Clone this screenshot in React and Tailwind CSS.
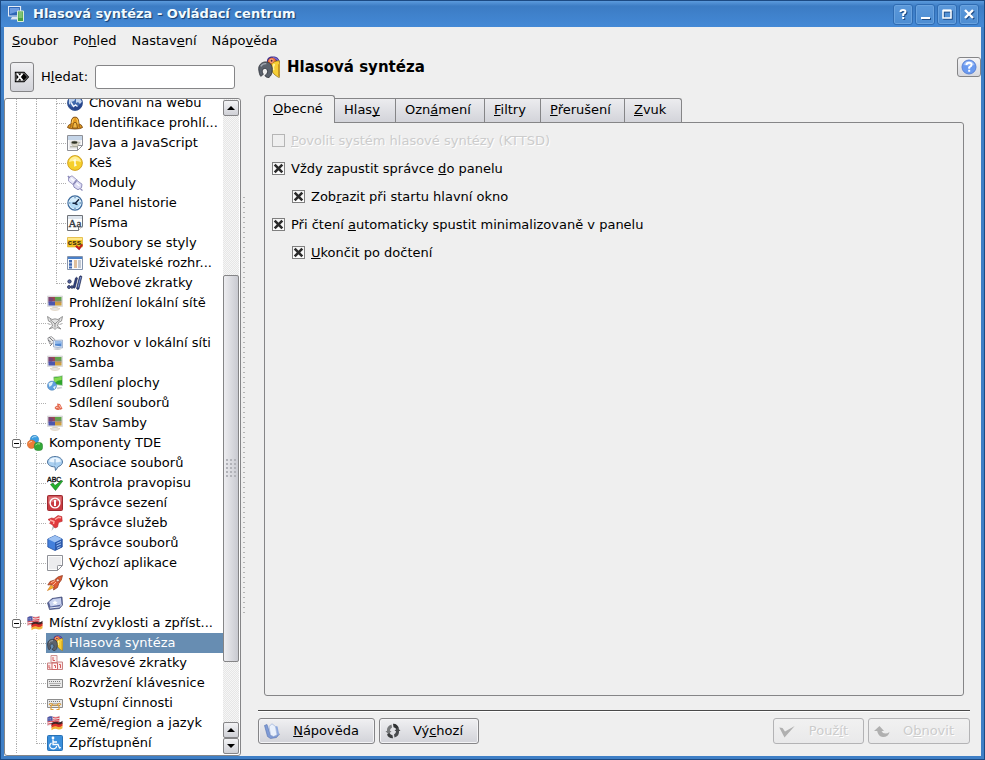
import { useState } from "react";

/* Label with an access key: the character after "&" is underlined. */
function Mnemonic({ text }) {
  const at = text.indexOf("&");
  if (at < 0) return <span>{text}</span>;
  return (
    <span className="whitespace-pre">
      {text.slice(0, at)}
      <u className="underline underline-offset-1 decoration-1 [text-decoration-skip-ink:none]">{text[at + 1]}</u>
      {text.slice(at + 2)}
    </span>
  );
}

function Svg({ size = 16, children }) {
  return (
    <svg width={size} height={size} viewBox="0 0 16 16" fill="none" className="block shrink-0" aria-hidden="true">
      {children}
    </svg>
  );
}

const SambaArt = () => (
  <>
    <path d="M.5 1h15v10.500H.5z" fill="#e2e2e2" stroke="#cfcfd2" strokeWidth=".6" />
    <path d="M1.500 2H8v4.500H1.500z" fill="#9c4a52" />
    <path d="M8 2h6.500v4.500H8z" fill="#5fa548" />
    <path d="M1.500 6.500H8v4H1.500z" fill="#4a56b0" />
    <path d="M8 6.500h6.500v4H8z" fill="#cfa03c" />
    <path d="M1.500 2l5 1.500L5 7 1.500 8z" fill="#5b3f93" opacity=".55" />
    <path d="M8 4l6.500 1v3L8 7z" fill="#9a6a9c" opacity=".35" />
    <path d="M6 11.500h4l1 1.500H5z" fill="#d3d3d6" />
    <path d="M3 13.500q5-2 10 0-1 2-5 2t-5-2z" fill="#e6e4e4" stroke="#d8c4a6" strokeWidth=".5" />
  </>
);

const FlagArt = () => (
  <>
    <path d="M.5 2.500q3-2 5.500-.7t6.500-.6l-.5 8q-3 1.300-6 .5T.5 10.500z" fill="#f6e9ec" stroke="#c08a96" strokeWidth=".4" />
    <path d="M6 2.600q3 1 6.300-.5M5.500 4.700q3.500 1 6.700-.4M.7 7q3-1.400 5.500-.5t6-.5M.7 9.300q3-1.400 5.500-.5t6-.5" stroke="#d64650" strokeWidth="1.100" />
    <path d="M.5 2.500q2.600-1.700 5-.9v4.200Q3 5.500.5 6.500z" fill="#4a58a8" />
    <path d="M1.500 3.500h3M1.500 5h3" stroke="#b9c0e2" strokeWidth=".6" strokeDasharray="1 .6" />
    <path d="M4.500 8q3.500-2 6-1t5-1.300V9q-2.500 2-5 1t-6 1z" fill="#402426" />
    <path d="M4.500 10.200q3.500-2 6-1t5-1.300V11q-2.500 2-5 1t-6 1z" fill="#db3229" />
    <path d="M4.500 12.700q3.500-2 6-1t5-1.300v2.800q-2.500 2-5 1t-6 1z" fill="#f0b33a" />
  </>
);

const ParrotArt = () => (
  <>
    <path d="M6.500 4.200C6.500 1.500 8 .4 10.500.4c3-.1 4.900 1.200 5.200 4L10 10z" fill="#40308c" />
    <path d="M11 1.200q3.500.3 4.200 4" stroke="#7a6bd0" strokeWidth="1" />
    <path d="M7 5.300C7 2.500 8.500 1 10.800 1.200c1.800.4 2.500 1.800 2.100 3.800L10.500 9z" fill="#ee6a32" />
    <path d="M9.500 6c1.200-1.400 3.700-2.700 6.200-2.500.4 3.500.2 8-.2 12.200-3-1.300-5.600-3.700-5.900-6.700z" fill="#f7cf35" stroke="#8b6b18" strokeWidth=".5" />
    <path d="M12 5.800q-1.500 2-.6 4.500" stroke="#fff3a0" strokeWidth="1.200" />
    <path d="M15 6v8.500" stroke="#c8931f" strokeWidth=".8" />
    <circle cx="9.800" cy="3.400" r="1.600" fill="#f7a27a" />
    <circle cx="9.900" cy="3.500" r=".7" fill="#4a2036" />
    <path d="M.6 10.200C.1 7 2.200 4.400 5.500 4.300c3.300-.1 5 2.500 4.900 5.500 0 2.600-.9 4.700-2.400 5.800-1.300.2-2.500-.4-3-1.400 1.700-.9 2.400-2.600 1.700-4.200-1-1.500-3-1.200-3.500.5-.2 1 .1 2 .7 2.800l-1.900 1.500C1.200 13.800.8 12 .6 10.200z" fill="#5b626c" stroke="#292d34" strokeWidth=".6" />
    <path d="M2 7.600Q3.400 5.400 6 5.600" stroke="#a2a9b2" />
  </>
);

const KeyboardArt = () => (
  <>
    <path d="M.5 4.500h15v8H.5z" fill="#e9e9e9" stroke="#8d8d8d" />
    <path d="M2 6.500h12M2.500 8.500h11" stroke="#787878" strokeDasharray="1 1" />
    <path d="M3 10.500h10" stroke="#858585" />
  </>
);

const PageArt = () => (
  <>
    <path d="M.5.5h15v10l-5 5H.5z" fill="#fbfbfb" stroke="#8e9097" />
    <path d="M2 2h12v8l-4 4H2z" fill="#ececee" />
    <path d="M15.500 10.500l-5 5v-4.200q0-.8.8-.8z" fill="#fff" stroke="#8e9097" />
  </>
);

const icons = {
  globe: (
    <>
      <circle cx="8" cy="8" r="7.500" fill="#3f68ac" stroke="#2d4a86" strokeWidth=".8" />
      <path d="M2 4q3-3 6-2 1 2-1 4l-3 1-2 3zM9 3q4-1 6 4l-2 2-2-2-2 1z" fill="#c3d5ef" />
      <path d="M.8 8l3.700 4.500L8 9l3 2.500L15 7q.5 6-4.500 8Q2 16 .8 8z" fill="#27458c" />
      <path d="M4 7.500l2.500 4L8.500 10l2 1.500" stroke="#eef4ff" strokeWidth="1.500" />
    </>
  ),
  hat: (
    <>
      <path d="M.5 12.500Q1 9.500 4 9q0-5 2-6.500 2-.8 4 0Q12 4 12 9q3 .5 3.500 3.500-2 1.500-7.500 1.500T.5 12.500z" fill="#e39a20" stroke="#7a4b14" strokeWidth=".9" />
      <path d="M5 8q.5-4 2-4.600M9.500 3.500Q11 5 11 9" stroke="#ffd36b" />
      <path d="M4 9.500q0 3-1.500 3.500M6.500 8l-1 5h5l-1-5q-1.500-1.500-3 0zM12 9.500q0 3 1.500 3.500" fill="#f0b844" stroke="#7a4a12" strokeWidth=".8" />
    </>
  ),
  java: (
    <>
      <PageArt />
      <path d="M1 1h14v4H1z" fill="#c5d5e8" />
      <path d="M4 7q4-2 7 0l2 .5-1.500 1.500-1 2.500h-4L4.500 9z" fill="#d9d5c5" stroke="#8a8c7e" strokeWidth=".4" />
      <ellipse cx="7.500" cy="7.500" rx="3" ry="1.300" fill="#2f3326" />
      <path d="M3 11.800h8" stroke="#a5a594" />
    </>
  ),
  cache: (
    <>
      <circle cx="8" cy="8" r="7.400" fill="#f6cf2a" stroke="#cc9a1c" strokeWidth=".9" />
      <path d="M2 7C2.800 2.800 6 1.500 8 1.500s5.200 1.300 6 5.500q-6-2-12 0z" fill="#fff09a" />
      <path d="M6.500 5.800L8 5v5.500l1.500-.8" stroke="#fffce0" strokeWidth="1.600" />
    </>
  ),
  module: (
    <>
      <path d="M1.500 2.500L5 .8l4.500 3.700L6 9.500 1.500 6z" fill="#e9e8f8" stroke="#9492be" strokeWidth=".9" />
      <path d="M6.500 10L10 5.500l5 3.700-.5 3.500-3.500 2-4-2.500z" fill="#dcdbf3" stroke="#8482b4" strokeWidth=".9" />
      <path d="M6 9.500l4-5M.8 1l2 2M13.500 14l2 1.500" stroke="#8a88b8" strokeWidth="1.200" />
      <path d="M4 3.500l3 2.500M9.500 8.500l3 2.500" stroke="#fff" strokeWidth="1.200" />
    </>
  ),
  clock: (
    <>
      <circle cx="8" cy="8" r="7.100" fill="#e4f3fc" stroke="#3e6c9e" strokeWidth="1.200" />
      <circle cx="8" cy="8" r="5.500" fill="#b5dcf6" />
      <path d="M3 7q1-4 5-4t5 4q-5-1-10 0z" fill="#d9effc" />
      <path d="M12 4.300L8.300 8.300H5.500M8 8.500l2.500 1.200" stroke="#15233c" strokeWidth="1.400" />
      <path d="M8 2v1.300M8 12.700V14M2 8h1.300M12.700 8H14" stroke="#4476a6" />
    </>
  ),
  fonts: (
    <>
      <path d="M.5.500h15v11l-4 4H.5z" fill="#fdfdfd" stroke="#6f7379" />
      <path d="M1 1h14v3H1z" fill="#dfe6ee" />
      <text x="1.500" y="11.500" fontSize="11" fontFamily="Liberation Serif, serif" fill="#32363c" stroke="#32363c" strokeWidth=".3">Aa</text>
      <path d="M11.500 15.500v-3.500h4" fill="#fff" stroke="#6f7379" />
    </>
  ),
  css: (
    <>
      <path d="M.5 2.500h15v9.500H.5z" fill="#f3c326" stroke="#d8ab26" strokeWidth=".6" />
      <path d="M1 3h14v2H1z" fill="#ffe98a" />
      <text x=".8" y="9.500" fontSize="8" fontFamily="Liberation Sans, sans-serif" fontWeight="bold" fill="#3b2a10">css</text>
      <path d="M8.500 11.500l1.500-1 2 2 2.700-3.500 1 1-3.500 5z" fill="#d11a1a" stroke="#991212" strokeWidth=".5" />
    </>
  ),
  list: (
    <>
      <path d="M.5 1.500h15v13H.5z" fill="#f7f9fc" stroke="#8494ad" />
      <path d="M1 2h14v2H1z" fill="#4a80c8" />
      <path d="M2 5h3v2.500H2zM2 8.300h3v2.400H2zM2 11.500h3v2H2z" fill="#3f68b0" />
      <path d="M7 6h3M7 8h3M7 10h3M7 12h3" stroke="#c9863c" />
      <path d="M11 6h3M11 8h3M11 10h3M11 12h3" stroke="#8d97a8" />
    </>
  ),
  shortcut: (
    <>
      <path d="M6 12.500L8.500 3q1-1.500 2 0L8.200 12.500q-1 1.500-2.200 0zM9.500 13.500l3-12q1-1.300 2.400 0l-3 12.500q-1.500 1.300-2.400-.5z" fill="#2e3f80" stroke="#1b2344" strokeWidth=".6" />
      <path d="M11 12.500l2.700-10.500" stroke="#8ea4dd" strokeWidth=".8" />
      <circle cx="2.500" cy="6.500" r="1.700" fill="#5566a0" stroke="#232b50" strokeWidth=".8" />
      <circle cx="2" cy="12" r="1.500" fill="#5566a0" stroke="#232b50" strokeWidth=".8" />
      <circle cx="5" cy="12" r="1.300" fill="#5566a0" stroke="#232b50" strokeWidth=".8" />
    </>
  ),
  samba: <SambaArt />,
  proxy: (
    <>
      <path d="M.5 1.500l4.500 3q3-1.300 6 0l4.500-3-1 4.500-3 1.500L10.500 11l3.500 3-4-1.500L8 14.500l-2-2L2 14l3.500-3-1-3.500-3-1.500z" fill="#e2e2e2" stroke="#8b8b8b" strokeWidth=".9" />
      <path d="M5.500 6.500L8 9l2.500-2.500M8 9v3.500M3 4.500l2.500 2M13 4.500l-2.500 2" stroke="#8f8f8f" />
      <path d="M.5 8.500l3 1M15.500 8.500l-3 1" stroke="#a5a5a5" />
    </>
  ),
  lanchat: (
    <>
      <path d="M.8 3l3.500-1.500 3.500 3-1 3.500-4 1z" fill="#e9e9ea" stroke="#8b8c8f" strokeWidth=".8" />
      <path d="M2 2l4 4M5 9l-2 2M.8 5l3 2" stroke="#77797d" />
      <path d="M6.500 5.500l9-.5v8l-9-1z" fill="#dbe6f5" stroke="#9aabc6" strokeWidth=".8" />
      <path d="M8 6.500h6.500v5L8 10.500z" fill="#4f86d0" />
      <path d="M8 6.500h6.500v2L8 9z" fill="#94bbec" />
      <path d="M6 14q4-2 9-.3-4 2.300-9 .3z" fill="#c5cad3" />
    </>
  ),
  desktopshare: (
    <>
      <path d="M6.500 2L15.500.8v9.700L7.500 9.500z" fill="#2fa52c" stroke="#c4d6c4" strokeWidth=".8" />
      <path d="M7.300 3l7.400-1.300V5q-4 0-7.400 3z" fill="#84d94e" />
      <circle cx="5" cy="10.700" r="4.600" fill="#5f9fe0" stroke="#5383b3" strokeWidth=".5" />
      <path d="M1.500 8.500q3-2.500 4.500-1.500l-1 3-2.500 2zM6 12l3-1.500-1.500 4z" fill="#dff1f8" />
      <path d="M9.500 12.500l5-.8.8 1.500-5 1z" fill="#d0d2d6" />
    </>
  ),
  fileshare: (
    <>
      <path d="M7.500 13q1-2.500 3-2.500L10 8.500l3 .5 2.500 4.500q-1 1.500-3 1-3 1.500-5-1.500z" fill="#e2694f" />
      <path d="M9 12.500q2-1 3 1M12 10l2 3" stroke="#ffc7b5" />
    </>
  ),
  components: (
    <>
      <circle cx="7.500" cy="4.500" r="4.200" fill="#3a9ee2" stroke="#2476b4" strokeWidth=".5" />
      <circle cx="4.500" cy="9.300" r="4.200" fill="#ee7c38" stroke="#c05e24" strokeWidth=".5" />
      <rect x="7.300" y="7.500" width="8.300" height="8" rx="3" fill="#34a838" stroke="#237c26" strokeWidth=".5" />
      <path d="M5 3q1.500-2 4.500-1.300M2 8.300q1-2 3-2" stroke="#fff" strokeOpacity=".6" />
      <path d="M8.500 10q2-2 4.500-1" stroke="#9be28c" />
    </>
  ),
  bubble: (
    <>
      <path d="M8 1.500c4.200 0 7.500 2.300 7.500 5.500 0 2-1.500 3.700-4.200 4.600L8.500 15.500l-.5-3.600C3.700 11.800.5 9.900.5 7S3.800 1.500 8 1.500z" fill="#a9cff0" stroke="#53779f" />
      <path d="M2 6.500q1-4 6-4t6 4q-3 1-6 1t-6-1z" fill="#eaf5ff" />
      <path d="M8 4v6" stroke="#8fb5d8" strokeWidth="1.200" />
    </>
  ),
  spell: (
    <>
      <text x="0" y="6.500" fontSize="7" fontFamily="Liberation Sans, sans-serif" fill="#111" stroke="#111" strokeWidth=".35">ABC</text>
      <path d="M3.500 9.500l2.500-1.500 2 2.600L14.500 5.500l1.200.6L8.500 15.500z" fill="#23b02b" stroke="#127018" strokeWidth=".6" />
    </>
  ),
  power: (
    <>
      <rect x=".5" y=".5" width="15" height="15" rx="1" fill="#c93a40" stroke="#9c2b30" />
      <path d="M1.500 1.500h13v5q-6-1-13 2z" fill="#e07478" />
      <circle cx="8" cy="8" r="4.900" stroke="#fff" strokeWidth="1.400" />
      <path d="M8 5v6" stroke="#fff" strokeWidth="2" />
    </>
  ),
  pin: (
    <>
      <path d="M6 10l-1.500 6L8.500 11z" fill="#b4b6ba" />
      <path d="M1 4.500L4.500 3l2.500.5L11 .6l3.800 1 .4 4.700-3.700 1.200L10.500 12l-2.500 1-3-3.500L2.500 8.300l1.500-1.500z" fill="#e0393c" stroke="#b82a2e" strokeWidth=".6" />
      <path d="M8 4.500l3.500-2.300 2.500.5M3 5l4 1.500-.5 2.500" stroke="#ffa9a2" strokeWidth="1.400" />
    </>
  ),
  cube: (
    <>
      <path d="M.8 4L8 .6 15.200 4v8L8 15.500.8 12z" fill="#4380dc" stroke="#234e9c" strokeWidth=".8" />
      <path d="M.8 4L8 .6 15.200 4 8 7.500z" fill="#9cc1f3" />
      <path d="M8 7.500L15.200 4v8L8 15.500z" fill="#2b59ac" />
      <path d="M9.500 8.500l4.500-2M9.500 11l4.500-2M10 13.300l3.500-1.600" stroke="#a5c6f5" />
    </>
  ),
  page: <PageArt />,
  rocket: (
    <>
      <path d="M4 10L.5 15.500 7 12.500z" fill="#f7b32b" stroke="#cf7415" strokeWidth=".6" />
      <path d="M15.500.5q-5 .5-8 4.500L3 6.500.8 10 5 9.500 7 11.500l-.5 3.500 4-2.500 1.300-4Q15 5.500 15.500.5z" fill="#dd5c34" stroke="#8e3a20" strokeWidth=".7" />
      <circle cx="10.800" cy="5.300" r="1.500" fill="#f4dcd2" stroke="#8e2c14" strokeWidth=".6" />
      <path d="M4 7.700L8 5.500M6 10l3-3" stroke="#ffb994" />
    </>
  ),
  sources: (
    <>
      <path d="M.5 8L5 3.500 15 2l.5 8-3 3.500-10 1z" fill="#5a679f" stroke="#39436f" strokeWidth=".7" />
      <path d="M2 7l4-3 8-1 .5 6.500-11 2z" fill="#c9d2ee" />
      <path d="M2.800 13l9.500-1 2.700-2.500" stroke="#e5e9f5" />
      <path d="M8 5l.8 1.800 2 .1-1.500 1.300.5 1.800L8 9l-1.700 1 .4-1.900L5.200 6.900l2-.1z" fill="#fff" />
    </>
  ),
  flags: <FlagArt />,
  parrot: <ParrotArt />,
  keys: (
    <>
      <path d="M4 .5h6v7H4z" fill="#fcf0f0" stroke="#cf9292" />
      <path d="M.5 8h6v6.500h-6zM10 7h5.500v7.500H10z" fill="#fbeaea" stroke="#c98383" />
      <path d="M5 8h5.500v6.500H5z" fill="#fff4f4" stroke="#cf6666" />
      <path d="M6 2v3.500h2M2 10v3h1.500M12 9.500h1.500V13M7 10.500h1.500V13" stroke="#d75c5c" />
    </>
  ),
  keyboard: <KeyboardArt />,
  inputactions: (
    <>
      <KeyboardArt />
      <path d="M3.500 14.500h3M9.500 14.500h3M4 14.500q-.5-5 2-4.500h4q2.500-.5 2 4.500M2 10q2-3 4 0M10 10q2-3 4 0" stroke="#e2a23b" strokeWidth="1.200" />
    </>
  ),
  access: (
    <>
      <rect x=".5" y=".5" width="15" height="15" rx="1" fill="#3a8fdc" stroke="#2a72b4" />
      <circle cx="6" cy="3" r="1.400" fill="#fff" />
      <path d="M6 4.500v5h5l1.500 3.500 1.500-.5M6.200 7H10" stroke="#fff" strokeWidth="1.300" />
      <path d="M4.500 8q-2.500 1.500-1.500 4 1.500 2.500 4.500 1.700 2-.8 2.200-2.700" stroke="#fff" strokeWidth="1.200" />
    </>
  ),
};

const tree = [
  { level: 3, icon: "globe", label: "Chování na webu" },
  { level: 3, icon: "hat", label: "Identifikace prohlí..." },
  { level: 3, icon: "java", label: "Java a JavaScript" },
  { level: 3, icon: "cache", label: "Keš" },
  { level: 3, icon: "module", label: "Moduly" },
  { level: 3, icon: "clock", label: "Panel historie" },
  { level: 3, icon: "fonts", label: "Písma" },
  { level: 3, icon: "css", label: "Soubory se styly" },
  { level: 3, icon: "list", label: "Uživatelské rozhr..." },
  { level: 3, icon: "shortcut", label: "Webové zkratky", last: true },
  { level: 2, icon: "samba", label: "Prohlížení lokální sítě" },
  { level: 2, icon: "proxy", label: "Proxy" },
  { level: 2, icon: "lanchat", label: "Rozhovor v lokální síti" },
  { level: 2, icon: "samba", label: "Samba" },
  { level: 2, icon: "desktopshare", label: "Sdílení plochy" },
  { level: 2, icon: "fileshare", label: "Sdílení souborů" },
  { level: 2, icon: "samba", label: "Stav Samby", last: true },
  { level: 1, icon: "components", label: "Komponenty TDE" },
  { level: 2, icon: "bubble", label: "Asociace souborů" },
  { level: 2, icon: "spell", label: "Kontrola pravopisu" },
  { level: 2, icon: "power", label: "Správce sezení" },
  { level: 2, icon: "pin", label: "Správce služeb" },
  { level: 2, icon: "cube", label: "Správce souborů" },
  { level: 2, icon: "page", label: "Výchozí aplikace" },
  { level: 2, icon: "rocket", label: "Výkon" },
  { level: 2, icon: "sources", label: "Zdroje", last: true },
  { level: 1, icon: "flags", label: "Místní zvyklosti a zpříst..." },
  { level: 2, icon: "parrot", label: "Hlasová syntéza" },
  { level: 2, icon: "keys", label: "Klávesové zkratky" },
  { level: 2, icon: "keyboard", label: "Rozvržení klávesnice" },
  { level: 2, icon: "inputactions", label: "Vstupní činnosti" },
  { level: 2, icon: "flags", label: "Země/region a jazyk" },
  { level: 2, icon: "access", label: "Zpřístupnění", last: true },
];

/* One 20px indent column of the tree with its dotted guide lines. */
function Guide({ elbow, last, expander }) {
  return (
    <span className="relative flex w-5 shrink-0 flex-col pl-[10px]">
      <span className={`h-[11px] border-l border-dotted border-[#b0b0b0] ${elbow ? "border-b" : ""}`} />
      {!last && <span className="h-[9px] border-l border-dotted border-[#b0b0b0]" />}
      {expander && (
        <button type="button" aria-label="Sbalit" className="absolute left-[6px] top-[6px] flex h-[9px] w-[9px] items-center justify-center rounded-[2px] border border-[#6d6d6d] bg-white">
          <span className="h-px w-[5px] bg-black" />
        </button>
      )}
    </span>
  );
}

function TreeRow({ item, selected, onSelect }) {
  const columns = Array.from({ length: item.level }, (_, i) => i + 1);
  return (
    <li role="treeitem" aria-selected={selected} onClick={onSelect} className="flex h-5 shrink-0">
      {columns.map((c) => (
        <Guide key={c} elbow={c === item.level} last={c === item.level && item.last} expander={item.level === 1} />
      ))}
      <span className={`flex min-w-0 flex-1 items-center gap-[6px] overflow-hidden whitespace-nowrap pl-px ${selected ? "bg-[#678db2] text-white" : ""}`}>
        <Svg>{icons[item.icon]}</Svg>
        {item.label}
      </span>
    </li>
  );
}

function ScrollButton({ down }) {
  return (
    <button type="button" aria-label={down ? "Dolů" : "Nahoru"} className="flex h-4 w-4 shrink-0 items-center justify-center rounded-[2px] border border-[#858587] bg-linear-to-b from-[#f3f3f5] to-[#cfd0d6]">
      <svg width="8" height="4" viewBox="0 0 8 4" aria-hidden="true">
        <path d={down ? "M0 0h8L4 4z" : "M0 4h8L4 0z"} fill="#000" />
      </svg>
    </button>
  );
}

function ScrollBar() {
  return (
    <div className="flex w-4 shrink-0 flex-col bg-[#e9e9e9] bg-[repeating-conic-gradient(#e6e6e6_0_25%,#f6f6f6_0_50%)] bg-[size:2px_2px] pt-px">
      <ScrollButton />
      <div className="grow-[159] basis-0" />
      <div className="flex grow-[386] basis-0 items-center justify-center rounded-[2px] border border-[#858587] bg-linear-to-r from-[#ededf0] to-[#c9cad1]">
        <div className="h-5 w-3 bg-[radial-gradient(circle,#b2b3b9_1px,transparent_1px)] bg-[size:4px_4px]" />
      </div>
      <div className="grow-[60] basis-0" />
      <ScrollButton />
      <ScrollButton down />
    </div>
  );
}

function TitleButton({ label, children }) {
  return (
    <button type="button" aria-label={label} className="flex h-[21px] w-5 items-center justify-center rounded-[3px] border border-[#2f6cb3] bg-linear-to-b from-[#5b98da] to-[#4d8dd2] shadow-[inset_0_0_0_1px_#6aa3df]">
      <svg width="12" height="12" viewBox="0 0 12 12" fill="none" stroke="#fff" strokeWidth="2" className="drop-shadow-[1px_1px_0_#1e4c86]" aria-hidden="true">
        {children}
      </svg>
    </button>
  );
}

function Check({ label, nested, ...props }) {
  return (
    <label className={`flex h-5 items-center gap-[6px] ${nested ? "ml-5" : ""} ${props.disabled ? "text-[#cccccc] [text-shadow:1px_1px_0_#fff]" : ""}`}>
      <span className="grid pb-px">
        <input
          type="checkbox"
          {...props}
          className="peer col-start-1 row-start-1 h-[13px] w-[13px] appearance-none border border-[#7f7f7f] bg-white bg-linear-to-b from-[#f4f4f4] to-[#fff] disabled:border-[#b5b5b5] disabled:from-[#efefef] disabled:to-[#efefef]"
        />
        <svg width="13" height="13" viewBox="0 0 13 13" className="pointer-events-none col-start-1 row-start-1 hidden peer-checked:block" aria-hidden="true">
          <path d="M2.700 2.700l7.600 7.600M10.300 2.700l-7.600 7.600" stroke="#2b2b2b" strokeWidth="2.600" />
        </svg>
      </span>
      <Mnemonic text={label} />
    </label>
  );
}

function PushButton({ label, icon, disabled, className }) {
  return (
    <button
      type="button"
      disabled={disabled}
      className={`flex h-[26px] items-center rounded-[3px] border pl-[5px] pr-[15px] ${disabled ? "border-[#b3b3b5] bg-linear-to-b from-[#f1f1f1] to-[#e9e9ea] text-[#cccccc] [text-shadow:1px_1px_0_#fff]" : "border-[#858587] bg-linear-to-b from-[#f0f0f2] to-[#d2d3d9] shadow-[inset_0_0_0_1px_#f4f4f6]"} ${className}`}
    >
      <Svg size={16}>{icon}</Svg>
      <span className="flex-1 text-right">
        <Mnemonic text={label} />
      </span>
    </button>
  );
}

const tabs = [
  { label: "&Obecné", width: "w-[71px]" },
  { label: "Hlas&y", width: "w-[61px]" },
  { label: "Ozn&ámení", width: "w-[89px]" },
  { label: "&Filtry", width: "w-[56px]" },
  { label: "&Přerušení", width: "w-[84px]" },
  { label: "&Zvuk", width: "w-[57px]" },
];

export default function App() {
  const [selected, setSelected] = useState(27);
  const [tab, setTab] = useState(0);
  return (
    <div className="flex h-screen flex-col overflow-hidden border border-[#1c4a83] bg-[#3f7fc6] pb-[3px] pl-[3px] pr-[3px] font-['DejaVu_Sans',sans-serif] text-[13px] leading-4 text-black">
      <header className="-ml-[3px] -mr-[3px] flex h-[26px] shrink-0 items-center gap-2 bg-linear-to-b from-[#5c9bdd] via-[#3c7cc4] via-20% to-[#4489d6] pl-[7px] pr-[5px]">
        <Svg>
          <path d="M.5.500h12v9.500H.5z" fill="#2f66b6" stroke="#e5ecf6" strokeWidth="1.200" />
          <path d="M2 2h9v3L2 8z" fill="#6c9ce0" />
          <path d="M4 11h6v2.500H2.500z" fill="#dbe4f0" />
          <path d="M9.500 5h6v10.500h-6z" fill="#49a044" stroke="#dcefd8" />
          <path d="M10.500 7h4M10.500 9h4M10.500 11h4" stroke="#b8e6a4" />
        </Svg>
        <h1 className="flex-1 pl-px font-bold text-[#f2fbff] [text-shadow:1px_1px_1px_#153a6b]">Hlasová syntéza - Ovládací centrum</h1>
        <div className="flex gap-[2px]">
          <TitleButton label="Co je to">
            <path d="M3.500 4q0-2 2.500-2t2.500 1.800Q8.500 5 6.200 6.200V8M6.200 9v2" />
          </TitleButton>
          <TitleButton label="Minimalizovat">
            <path d="M2 10h9" />
          </TitleButton>
          <TitleButton label="Maximalizovat">
            <path d="M2 2.500h8v7.500H2z" strokeWidth="1.500" />
            <path d="M2 2.500h8" />
          </TitleButton>
          <TitleButton label="Zavřít">
            <path d="M2 2l8 8M10 2l-8 8" strokeWidth="2.400" />
          </TitleButton>
        </div>
      </header>

      <div className="flex min-h-0 flex-1 flex-col bg-[#efefef]">
        <nav className="flex h-7 shrink-0 items-center gap-[15px] pl-2">
          {["&Soubor", "Po&hled", "Nastav&ení", "Nápo&věda"].map((m) => (
            <button key={m} type="button">
              <Mnemonic text={m} />
            </button>
          ))}
        </nav>

        <div className="flex min-h-0 flex-1">
          <aside className="flex w-[237px] shrink-0 flex-col">
            <div className="flex h-[43px] shrink-0 items-center pl-[6px] pr-[6px]">
              <button type="button" aria-label="Vymazat" className="flex h-[30px] w-6 items-center justify-center rounded-[3px] border border-[#858587] bg-linear-to-b from-[#f0f0f2] to-[#d2d3d9]">
                <svg width="16" height="12" viewBox="0 0 16 12" aria-hidden="true">
                  <path d="M.8.800h9.500L15.200 6l-4.900 5.200H.8z" fill="#000" />
                  <path d="M2 2.200h8L13.500 6 10 9.800H2z" fill="none" stroke="#fff" strokeWidth=".5" />
                  <path d="M3 2.500l5.500 7M8.500 2.500L3 9.500" stroke="#fff" strokeWidth="1.900" />
                </svg>
              </button>
              <label htmlFor="search" className="pl-[7px] pr-[7px]">
                <Mnemonic text="H&ledat:" />
              </label>
              <input id="search" type="text" className="h-6 min-w-0 flex-1 rounded-[3px] border border-[#858587] bg-white px-1 outline-none" />
            </div>
            <div className="flex min-h-0 flex-1 rounded-[3px] border border-[#858587] bg-white pb-px pr-px">
              <ul role="tree" className="flex min-w-0 flex-1 flex-col justify-end overflow-hidden pb-px pl-px">
                {tree.map((item, i) => (
                  <TreeRow key={i} item={item} selected={i === selected} onSelect={() => setSelected(i)} />
                ))}
              </ul>
              <ScrollBar />
            </div>
          </aside>

          <div className="flex w-[17px] shrink-0 items-center pl-px">
            <div className="h-[60%] w-1 bg-[radial-gradient(circle,#b4b4b4_1px,transparent_1px)] bg-[size:4px_5px]" />
          </div>

          <main className="flex min-w-0 flex-1 flex-col">
            <div className="flex h-6 shrink-0 items-center gap-[7px]">
              <Svg size={22}>
                <ParrotArt />
              </Svg>
              <h2 className="flex-1 text-[15px] font-bold leading-5">Hlasová syntéza</h2>
              <button type="button" aria-label="Nápověda" className="flex h-5 w-6 items-center justify-center rounded-[3px] border border-[#858587] bg-linear-to-b from-[#f4f4f6] to-[#d8d9de]">
                <Svg>
                  <circle cx="8" cy="8" r="7" fill="#6a9af0" stroke="#5b83d6" />
                  <path d="M2.500 6q1-4 5.500-4t5.500 4q-5 1-11 0z" fill="#9dbdf8" />
                  <path d="M5.500 6q0-2.200 2.600-2.200t2.500 2Q10.600 7 8.200 8.300v1.400M8.200 10.800v2" stroke="#fff" strokeWidth="2" />
                </Svg>
              </button>
            </div>

            <div className="flex min-h-0 flex-1 flex-col pb-3 pr-[11px] pt-4">
              <div className="flex min-h-0 flex-1 flex-col px-[6px]">
                <div role="tablist" className="flex h-[27px] shrink-0 items-end">
                  {tabs.map((t, i) => (
                    <button
                      key={t.label}
                      type="button"
                      role="tab"
                      aria-selected={i === tab}
                      onClick={() => setTab(i)}
                      className={`shrink-0 text-left ${t.width} ${
                        i === tab
                          ? "relative -mb-px h-7 rounded-t-[3px] border border-b-0 border-[#858587] bg-[#efefef] pb-px pl-2"
                          : "h-6 border-r border-t border-[#858587] bg-linear-to-b from-[#ececef] to-[#d3d4da] pb-[2px] pl-[9px] last:rounded-tr-[3px]"
                      }`}
                    >
                      <Mnemonic text={t.label} />
                    </button>
                  ))}
                </div>
                <section role="tabpanel" className="flex min-h-0 flex-1 flex-col gap-2 rounded-b-[3px] rounded-tr-[3px] border border-[#858587] pl-[7px] pt-2">
                  <Check label="&Povolit systém hlasové syntézy (KTTSD)" disabled />
                  <Check label="Vždy zapustit správce &do panelu" defaultChecked />
                  <Check label="Zob&razit při startu hlavní okno" nested defaultChecked />
                  <Check label="Při čtení &automaticky spustit minimalizovaně v panelu" defaultChecked />
                  <Check label="&Ukončit po dočtení" nested defaultChecked />
                </section>
              </div>

              <div className="mb-[6px] mt-[14px] h-[2px] shrink-0 border-b border-white bg-[#4a4a4a]" />

              <footer className="flex shrink-0 gap-1">
                <PushButton
                  label="&Nápověda"
                  className="w-[117px]"
                  icon={
                    <>
                      <path d="M.5 2.500L3 1.500l3.500 11 4 .5 5-2-3 3.500-6 1-3-2z" fill="#7f9bd6" stroke="#5672b0" strokeWidth=".6" />
                      <path d="M5 3.500L8 .8l3.500 2.700L13 12l-3.500 1.500L6.500 12z" fill="#eaf1fc" stroke="#9eb2da" strokeWidth=".7" />
                      <path d="M11.500 3l2 .5 1.700 8-1.700 1z" fill="#8ba7de" />
                    </>
                  }
                />
                <PushButton
                  label="Vý&chozí"
                  className="w-[100px]"
                  icon={
                    <>
                      <path d="M6.500 1.500Q1.500 3 2 8H.5L3.500 11.500 6.500 8H5q-.2-2.500 2-3.500z" fill="#77797b" />
                      <path d="M8 .8q4.500-.3 6 4.700L11.500 6.500Q10.500 4.500 8.500 4.300z" fill="#303234" />
                      <path d="M9.500 14.500Q14.500 13 14 8h1.500L12.500 4.500 9.500 8H11q.2 2.500-2 3.500z" fill="#484a4d" />
                      <path d="M8 15.200q-4.500.3-6-3.700l2.500-1.500q1 2 3 2.200z" fill="#3c3e40" />
                    </>
                  }
                />
                <div className="flex-1" />
                <PushButton
                  label="Použ&ít"
                  disabled
                  className="w-[91px]"
                  icon={<path d="M.3 4.500l3.200.5L6 8.500 15.700 3 5.500 14.500z" fill="#b0b0b0" />}
                />
                <PushButton
                  label="O&bnovit"
                  disabled
                  className="w-[102px]"
                  icon={<path d="M0 8l5.500-5L10 8H7.500q1 2.500 4 2.500 2 0 4-1.500-1 5-6.500 5Q4 13.500 3.200 8z" fill="#b0b0b0" />}
                />
              </footer>
            </div>
          </main>
        </div>
      </div>
    </div>
  );
}
